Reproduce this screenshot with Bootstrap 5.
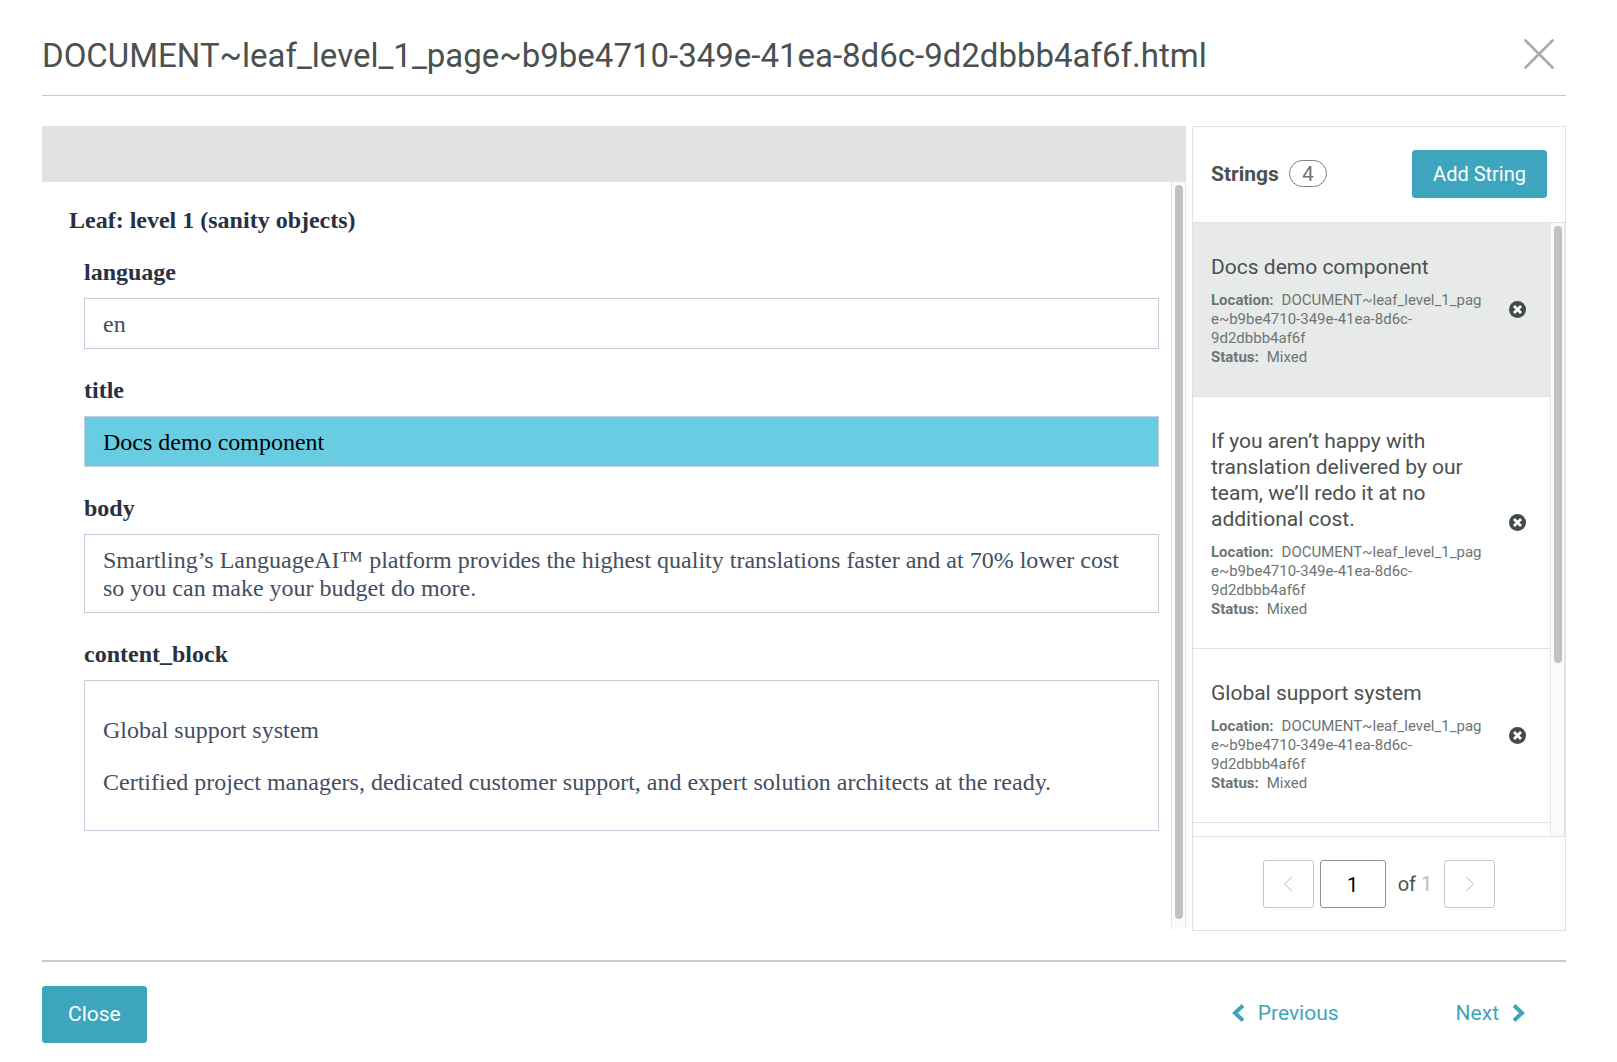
<!DOCTYPE html>
<html lang="en">
<head>
<meta charset="utf-8">
<meta name="viewport" content="width=device-width, initial-scale=1">
<title>String context</title>
<link href="https://cdn.jsdelivr.net/npm/bootstrap@5.3.0/dist/css/bootstrap.min.css" rel="stylesheet">
<style>
  :root { --teal: #3da6be; --ink: #4a5150; --soft: #6d7574; --rule: #e0e2e2; }
  body { font-family: Roboto, sans-serif; font-size: 21px; color: var(--ink); background: #fff; }
  .dialog-page { min-height: 100vh; padding: 0 51px 0 42px; }
  .dialog-head { height: 96px; padding: 12px 12px 0 0; border-bottom: 1px solid #c8cccb; }
  .dialog-head h1 { font-size: 33px; line-height: 40px; font-weight: 400; padding-top: 4px; }
  .btn-teal { --bs-btn-color: #fff; --bs-btn-bg: var(--teal); --bs-btn-border-color: var(--teal); --bs-btn-hover-color: #fff; --bs-btn-hover-bg: #3492a8; --bs-btn-hover-border-color: #3492a8; --bs-btn-active-color: #fff; --bs-btn-active-bg: #2f8598; --bs-btn-border-radius: 3px; --bs-btn-font-size: 20px; --bs-btn-line-height: 26px; --bs-btn-padding-x: 20px; --bs-btn-padding-y: 10px; }
  .btn-teal-lg { --bs-btn-font-size: 21px; --bs-btn-line-height: 27px; --bs-btn-padding-x: 25px; --bs-btn-padding-y: 14px; }
  .work { gap: 6px; margin: 30px 0 29px; min-height: 0; }
  .doc-pane { min-width: 0; margin-bottom: 2px; }
  .doc-bar { height: 56px; background: #e1e2e4; }
  .doc-body { font: 24px/28px "Liberation Serif", serif; color: #434e61; padding: 24px 12px 24px 27px; }
  .doc-body h2, .doc-body h3 { font-size: 24px; line-height: 28px; font-weight: 700; color: #283142; }
  .doc-body h2 { margin-bottom: 24px; }
  .doc-fields { padding-left: 15px; }
  .doc-field { margin-bottom: 27px; }
  .doc-field h3 { margin-bottom: 12px; }
  .doc-value { border: 1px solid #c8cddd; padding: 11px 18px 10px; }
  .doc-value.picked { background: #68cde2; color: #000; }
  .doc-value p { margin: 24px 0; }
  .scroll-track { width: 15px; flex: none; padding: 3px; border: 1px solid #e8e8e8; border-width: 0 1px; background: #fafafa; }
  .scroll-thumb { width: 8px; border-radius: 4px; background: #c1c1c1; }
  .strings-pane { width: 374px; flex: none; border: 1px solid var(--rule); }
  .strings-head { height: 96px; padding: 0 18px 2px; border-bottom: 1px solid var(--rule); }
  .strings-head h2 { font-size: 21px; line-height: 26px; font-weight: 700; }
  .count-pill { border: 1px solid #7b8281; border-radius: 14px; width: 38px; height: 27px; line-height: 26px; margin-left: 10px; color: var(--soft); }
  .strings-list .list-group-item { --bs-list-group-border-color: var(--rule); color: var(--ink); border-width: 0 0 1px; padding: 31px 24px 29px 18px; border-radius: 0; }
  .strings-list .list-group-item.chosen { background: #e8eae9; }
  .entry-text { width: 276px; }
  .entry-title { font-size: 21px; line-height: 26px; margin-bottom: 11px; }
  .entry-meta { font-size: 15px; line-height: 19px; color: var(--soft); overflow-wrap: anywhere; }
  .entry-meta b { margin-right: 8px; }
  .icon-btn { border: 0; background: none; padding: 0; line-height: 0; }
  .strings-list .icon-btn { padding-bottom: 3px; }
  .pager { height: 94px; gap: 6px; border-top: 1px solid var(--rule); font-size: 20px; }
  .page-total { padding: 0 6px; }
  .page-total span { color: #b9bfbe; }
  .page-step { width: 51px; height: 48px; border: 1px solid #c4c9c8; border-radius: 3px; background: #fff; padding: 0; line-height: 0; }
  .page-box { width: 66px; height: 48px; border: 1px solid #8f9695; border-radius: 3px; color: #000; text-align: center; padding: 3px 0 0; font-size: 20px; }
  .dialog-foot { border-top: 2px solid #c9cccc; height: 102px; padding: 24px 41px 0 0; }
  .foot-link { color: var(--teal); text-decoration: none; line-height: 54px; gap: 13px; }
  .foot-links { gap: 117px; }
</style>
<script src="https://cdn.jsdelivr.net/npm/bootstrap@5.3.0/dist/js/bootstrap.bundle.min.js"></script>
</head>
<body>
<svg class="d-none">
  <symbol id="remove" viewBox="0 0 17 17"><circle cx="8.5" cy="8.5" r="8.5" fill="#434b4a"/><path d="M5 5l7 7m0-7l-7 7" stroke="#fff" stroke-width="2.8" fill="none"/></symbol>
</svg>
<div class="dialog-page d-flex flex-column">
  <header class="dialog-head d-flex align-items-center justify-content-between">
    <h1 class="mb-0">DOCUMENT~leaf_level_1_page~b9be4710-349e-41ea-8d6c-9d2dbbb4af6f.html</h1>
    <button type="button" class="icon-btn" aria-label="Dismiss"><svg width="30" height="30" viewBox="0 0 30 30"><path d="M1.500 1.500l27 27m0-27l-27 27" stroke="#a5acab" stroke-width="2.600" stroke-linecap="round" fill="none"/></svg></button>
  </header>

  <main class="work d-flex flex-grow-1">
    <section class="doc-pane flex-grow-1 d-flex flex-column">
      <div class="doc-bar"></div>
      <div class="d-flex flex-grow-1">
        <article class="doc-body flex-grow-1">
          <h2>Leaf: level 1 (sanity objects)</h2>
          <div class="doc-fields">
            <div class="doc-field"><h3>language</h3><div class="doc-value">en</div></div>
            <div class="doc-field"><h3>title</h3><div class="doc-value picked">Docs demo component</div></div>
            <div class="doc-field"><h3>body</h3><div class="doc-value">Smartling’s LanguageAI™ platform provides the highest quality translations faster and at 70% lower cost so you can make your budget do more.</div></div>
            <div class="doc-field mb-0"><h3>content_block</h3><div class="doc-value"><p>Global support system</p><p>Certified project managers, dedicated customer support, and expert solution architects at the ready.</p></div></div>
          </div>
        </article>
        <div class="scroll-track d-flex flex-column"><div class="scroll-thumb" style="height:99%"></div></div>
      </div>
    </section>

    <aside class="strings-pane d-flex flex-column">
      <div class="strings-head d-flex align-items-center">
        <h2 class="mb-0">Strings</h2>
        <span class="count-pill text-center">4</span>
        <button type="button" class="btn btn-teal ms-auto">Add String</button>
      </div>
      <div class="d-flex flex-grow-1">
        <ul class="strings-list list-group list-group-flush flex-grow-1">
          <li class="list-group-item chosen d-flex align-items-center justify-content-between">
            <div class="entry-text">
              <div class="entry-title">Docs demo component</div>
              <div class="entry-meta"><b>Location:</b>DOCUMENT~leaf_level_1_page~b9be4710-349e-41ea-8d6c-9d2dbbb4af6f<br><b>Status:</b>Mixed</div>
            </div>
            <button type="button" class="icon-btn" aria-label="Remove"><svg width="17" height="17"><use href="#remove"/></svg></button>
          </li>
          <li class="list-group-item d-flex align-items-center justify-content-between">
            <div class="entry-text">
              <div class="entry-title">If you aren’t happy with translation delivered by our team, we’ll redo it at no additional cost.</div>
              <div class="entry-meta"><b>Location:</b>DOCUMENT~leaf_level_1_page~b9be4710-349e-41ea-8d6c-9d2dbbb4af6f<br><b>Status:</b>Mixed</div>
            </div>
            <button type="button" class="icon-btn" aria-label="Remove"><svg width="17" height="17"><use href="#remove"/></svg></button>
          </li>
          <li class="list-group-item border-bottom d-flex align-items-center justify-content-between">
            <div class="entry-text">
              <div class="entry-title">Global support system</div>
              <div class="entry-meta"><b>Location:</b>DOCUMENT~leaf_level_1_page~b9be4710-349e-41ea-8d6c-9d2dbbb4af6f<br><b>Status:</b>Mixed</div>
            </div>
            <button type="button" class="icon-btn" aria-label="Remove"><svg width="17" height="17"><use href="#remove"/></svg></button>
          </li>
        </ul>
        <div class="scroll-track d-flex flex-column"><div class="scroll-thumb" style="height:72%"></div></div>
      </div>
      <div class="pager d-flex align-items-center justify-content-center">
        <button type="button" class="page-step" aria-label="Previous page"><svg width="10" height="16" viewBox="0 0 10 16"><path d="M9 1L1.500 8 9 15" stroke="#b9bfbe" fill="none"/></svg></button>
        <input class="page-box" type="text" value="1" aria-label="Page">
        <div class="page-total">of <span>1</span></div>
        <button type="button" class="page-step" aria-label="Next page"><svg width="10" height="16" viewBox="0 0 10 16"><path d="M1 1l7.500 7L1 15" stroke="#b9bfbe" fill="none"/></svg></button>
      </div>
    </aside>
  </main>

  <footer class="dialog-foot d-flex align-items-start justify-content-between">
    <button type="button" class="btn btn-teal btn-teal-lg">Close</button>
    <nav class="foot-links d-flex" aria-label="Strings navigation">
      <a href="#" class="foot-link d-flex align-items-center"><svg width="13" height="18" viewBox="0 0 13 18"><path d="M11 1.500L3 9l8 7.500" stroke="currentColor" stroke-width="4" fill="none"/></svg>Previous</a>
      <a href="#" class="foot-link d-flex align-items-center">Next<svg width="13" height="18" viewBox="0 0 13 18"><path d="M2 1.500L10 9l-8 7.500" stroke="currentColor" stroke-width="4" fill="none"/></svg></a>
    </nav>
  </footer>
</div>
</body>
</html>
